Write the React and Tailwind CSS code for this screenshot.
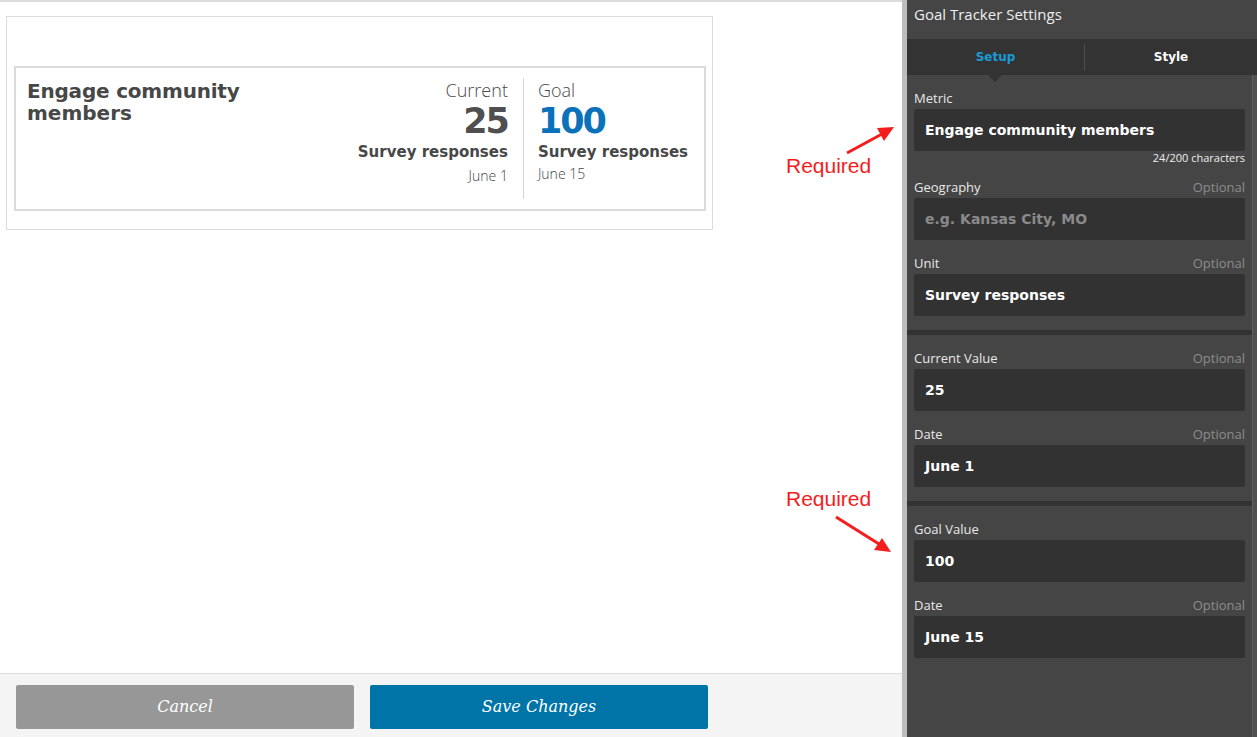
const sans = { fontFamily: '"Open Sans", "DejaVu Sans", sans-serif' }

function Field({ label, value, placeholder, optional, children }) {
  return (
    <div className="flex flex-col">
      <div className="flex h-[21px] items-center justify-between">
        <span className="font-['Open_Sans',sans-serif] text-[13px] text-[#e8e8e8]">{label}</span>
        {optional && (
          <span className="font-['Open_Sans',sans-serif] text-[13px] text-[#8c8c8c]">Optional</span>
        )}
      </div>
      <div className="flex h-[42px] items-center rounded-[2px] bg-[#323232] px-[11px]">
        <span
          className={`font-['DejaVu_Sans',sans-serif] text-[14px] font-bold ${
            value ? 'text-white' : 'text-[#8a8a8a]'
          }`}
        >
          {value || placeholder}
        </span>
      </div>
      {children}
    </div>
  )
}

function Section({ children }) {
  return <div className="flex flex-col gap-[13px] px-[7px] pb-[14px] pt-[13px]">{children}</div>
}

function Preview() {
  return (
    <div className="ml-[6px] mt-[14px] w-[707px] border border-[#dcdcdc] bg-white pb-[18px] pl-[7px] pr-[6px] pt-[49px]">
      <div className="flex h-[145px] border-2 border-[#dadada] pl-[11px] pr-[16px]">
        <div className="flex flex-1 flex-col pt-[12px] font-['DejaVu_Sans',sans-serif] text-[20px] font-bold leading-[22px] text-[#474747]">
          <span className="tracking-[-0.2px]">Engage community</span>
          <span>members</span>
        </div>
        <div className="flex flex-col items-end pr-[15px] pt-[11px]">
          <span className="font-['Open_Sans',sans-serif] text-[18px] font-light leading-[22px] text-[#4a4a4a]">Current</span>
          <span className="mt-[3px] font-['DejaVu_Sans',sans-serif] text-[35px] font-bold leading-[34px] tracking-[-2px] text-[#4f4f4f]">
            25
          </span>
          <span className="mt-[4px] font-['DejaVu_Sans',sans-serif] text-[15px] font-bold leading-[20px] text-[#474747]">
            Survey responses
          </span>
          <span className="mt-[3px] font-['Open_Sans',sans-serif] text-[14px] font-light text-[#444]">June 1</span>
        </div>
        <div className="my-[10px] w-px bg-[#d6d6d6]" />
        <div className="flex flex-col items-start pl-[14px] pt-[11px]">
          <span className="font-['Open_Sans',sans-serif] text-[18px] font-light leading-[22px] text-[#4a4a4a]">Goal</span>
          <span className="mt-[3px] font-['DejaVu_Sans',sans-serif] text-[35px] font-bold leading-[34px] tracking-[-2px] text-[#0b72b9]">
            100
          </span>
          <span className="mt-[4px] font-['DejaVu_Sans',sans-serif] text-[15px] font-bold leading-[20px] text-[#474747]">
            Survey responses
          </span>
          <span className="mt-[1px] font-['Open_Sans',sans-serif] text-[14px] font-light text-[#444]">June 15</span>
        </div>
      </div>
    </div>
  )
}

export default function App() {
  return (
    <div className="relative flex h-[737px] w-[1257px] overflow-hidden bg-white" style={sans}>
      {/* editor area */}
      <div className="flex w-[902px] flex-col border-t-2 border-[#dddddd]">
        <div className="flex-1">
          <Preview />
        </div>
        <div className="flex h-[64px] gap-[16px] border-t border-[#dcdcdc] bg-[#f4f4f4] px-[16px] pt-[11px]">
          <button className="h-[44px] w-[338px] rounded-[2px] bg-[#979797] font-['DejaVu_Serif',serif] text-[16px] italic text-white">
            Cancel
          </button>
          <button className="h-[44px] w-[338px] rounded-[2px] bg-[#0073a7] font-['DejaVu_Serif',serif] text-[16px] italic text-white">
            Save Changes
          </button>
        </div>
      </div>

      <div className="w-[5px] bg-[#bdbdbd]" />

      {/* settings panel */}
      <div className="flex w-[350px] flex-col bg-[#454545]">
        <div className="flex h-[39px] items-start pl-[7px] pt-[3px] font-['Open_Sans',sans-serif] text-[15px] text-[#eeeeee]">
          Goal Tracker Settings
        </div>
        <div className="relative flex h-[36px] bg-[#333333]">
          <div className="flex w-[177px] items-center justify-center font-['DejaVu_Sans',sans-serif] text-[12px] font-bold text-[#1a9bd7]">
            Setup
          </div>
          <div className="my-[5px] w-px bg-[#4e4e4e]" />
          <div className="flex flex-1 items-center justify-center font-['DejaVu_Sans',sans-serif] text-[12px] font-bold text-white">
            Style
          </div>
          <div className="absolute left-[81px] top-full h-0 w-0 border-l-[7px] border-r-[7px] border-t-[7px] border-l-transparent border-r-transparent border-t-[#333333]" />
        </div>
        <div className="flex flex-1">
          <div className="flex-1">
            <Section>
              <Field label="Metric" value="Engage community members">
                <div className="mt-[1px] h-[12px] text-right font-['Open_Sans',sans-serif] text-[11px] leading-[12px] text-[#eeeeee]">
                  24/200 characters
                </div>
              </Field>
              <Field label="Geography" placeholder="e.g. Kansas City, MO" optional />
              <Field label="Unit" value="Survey responses" optional />
            </Section>
            <div className="h-[5px] bg-[#333333]" />
            <Section>
              <Field label="Current Value" value="25" optional />
              <Field label="Date" value="June 1" optional />
            </Section>
            <div className="h-[5px] bg-[#333333]" />
            <Section>
              <Field label="Goal Value" value="100" />
              <Field label="Date" value="June 15" optional />
            </Section>
          </div>
          <div className="w-[5px] border-l border-[#5f5f5f] bg-[#505050]" />
        </div>
      </div>

      {/* annotations */}
      <span className="absolute left-[786px] top-[154px] font-['Liberation_Sans',sans-serif] text-[21px] leading-[24px] text-[#f41d1d]">
        Required
      </span>
      <span className="absolute left-[786px] top-[487px] font-['Liberation_Sans',sans-serif] text-[21px] leading-[24px] text-[#f41d1d]">
        Required
      </span>
      <svg className="pointer-events-none absolute left-0 top-0" width="1257" height="737">
        <line x1="847" y1="153" x2="882" y2="134" stroke="#f41d1d" strokeWidth="3" />
        <polygon points="894,127 877,128 884,141" fill="#f41d1d" />
        <line x1="836" y1="517" x2="879" y2="544" stroke="#f41d1d" strokeWidth="3" />
        <polygon points="891,552 874,550 882,538" fill="#f41d1d" />
      </svg>
    </div>
  )
}
